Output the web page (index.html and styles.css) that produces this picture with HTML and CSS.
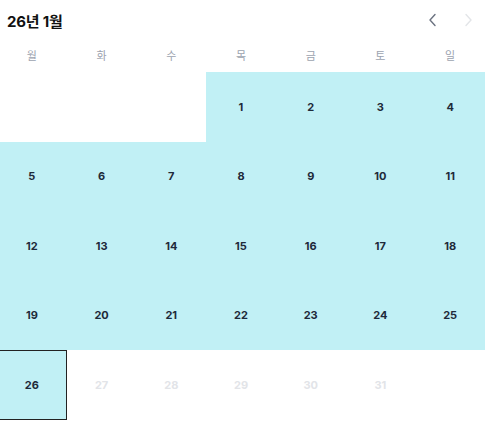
FILE: index.html
```html
<!DOCTYPE html>
<html lang="ko">
<head>
<meta charset="utf-8">
<link rel="stylesheet" href="styles.css">
</head>
<body>
<div class="cal">
  <div class="head">
    <div class="title">26년 1월</div>
    <div class="nav">
      <svg class="arrow" width="16" height="16" viewBox="0 0 16 16"><path d="M10 2.5 L5 8 L10 13.5" fill="none" stroke="#6b7280" stroke-width="1.4" stroke-linecap="round" stroke-linejoin="round"/></svg>
      <svg class="arrow" width="16" height="16" viewBox="0 0 16 16"><path d="M6 2.5 L11 8 L6 13.5" fill="none" stroke="#e3e5e8" stroke-width="1.4" stroke-linecap="round" stroke-linejoin="round"/></svg>
    </div>
  </div>
  <div class="week">
    <div>월</div><div>화</div><div>수</div><div>목</div><div>금</div><div>토</div><div>일</div>
  </div>
  <div class="days">
    <div class="d empty"></div><div class="d empty"></div><div class="d empty"></div>
    <div class="d on">1</div><div class="d on">2</div><div class="d on">3</div><div class="d on">4</div>
    <div class="d on">5</div><div class="d on">6</div><div class="d on">7</div><div class="d on">8</div><div class="d on">9</div><div class="d on">10</div><div class="d on">11</div>
    <div class="d on">12</div><div class="d on">13</div><div class="d on">14</div><div class="d on">15</div><div class="d on">16</div><div class="d on">17</div><div class="d on">18</div>
    <div class="d on">19</div><div class="d on">20</div><div class="d on">21</div><div class="d on">22</div><div class="d on">23</div><div class="d on">24</div><div class="d on">25</div>
    <div class="d on sel">26</div><div class="d off">27</div><div class="d off">28</div><div class="d off">29</div><div class="d off">30</div><div class="d off">31</div><div class="d empty"></div>
  </div>
</div>
</body>
</html>
```
FILE: styles.css
```css
html, body { margin: 0; padding: 0; background: #fff; overflow: hidden; }
body { font-family: Inter, "Noto Sans CJK KR", sans-serif; }
.cal { width: 485px; overflow: hidden; }
.head { height: 40px; display: flex; align-items: center; justify-content: space-between; padding: 0 9px 0 7px; box-sizing: border-box; }
.title { font-size: 15px; font-weight: 700; color: #111; letter-spacing: -0.2px; }
.nav { display: flex; gap: 19px; align-items: center; }
.arrow { display: block; }
.week { display: grid; grid-template-columns: repeat(7, 1fr); width: 488px; margin-left: -3px; height: 32px; align-items: center; margin-top: -1px; }
.week div { text-align: center; font-size: 11px; color: #9ca3af; }
.days { display: grid; grid-template-columns: repeat(7, 1fr); width: 488px; margin-left: -3px; grid-auto-rows: 69.5px; margin-top: 1px; }
.d { display: flex; align-items: center; justify-content: center; font-size: 11px; font-weight: 700; color: #1e2a3a; box-sizing: border-box; }
.on { background: #c1f0f5; }
.off { color: #e2e4e8; }
.sel { border: 1px solid #222; }
```
